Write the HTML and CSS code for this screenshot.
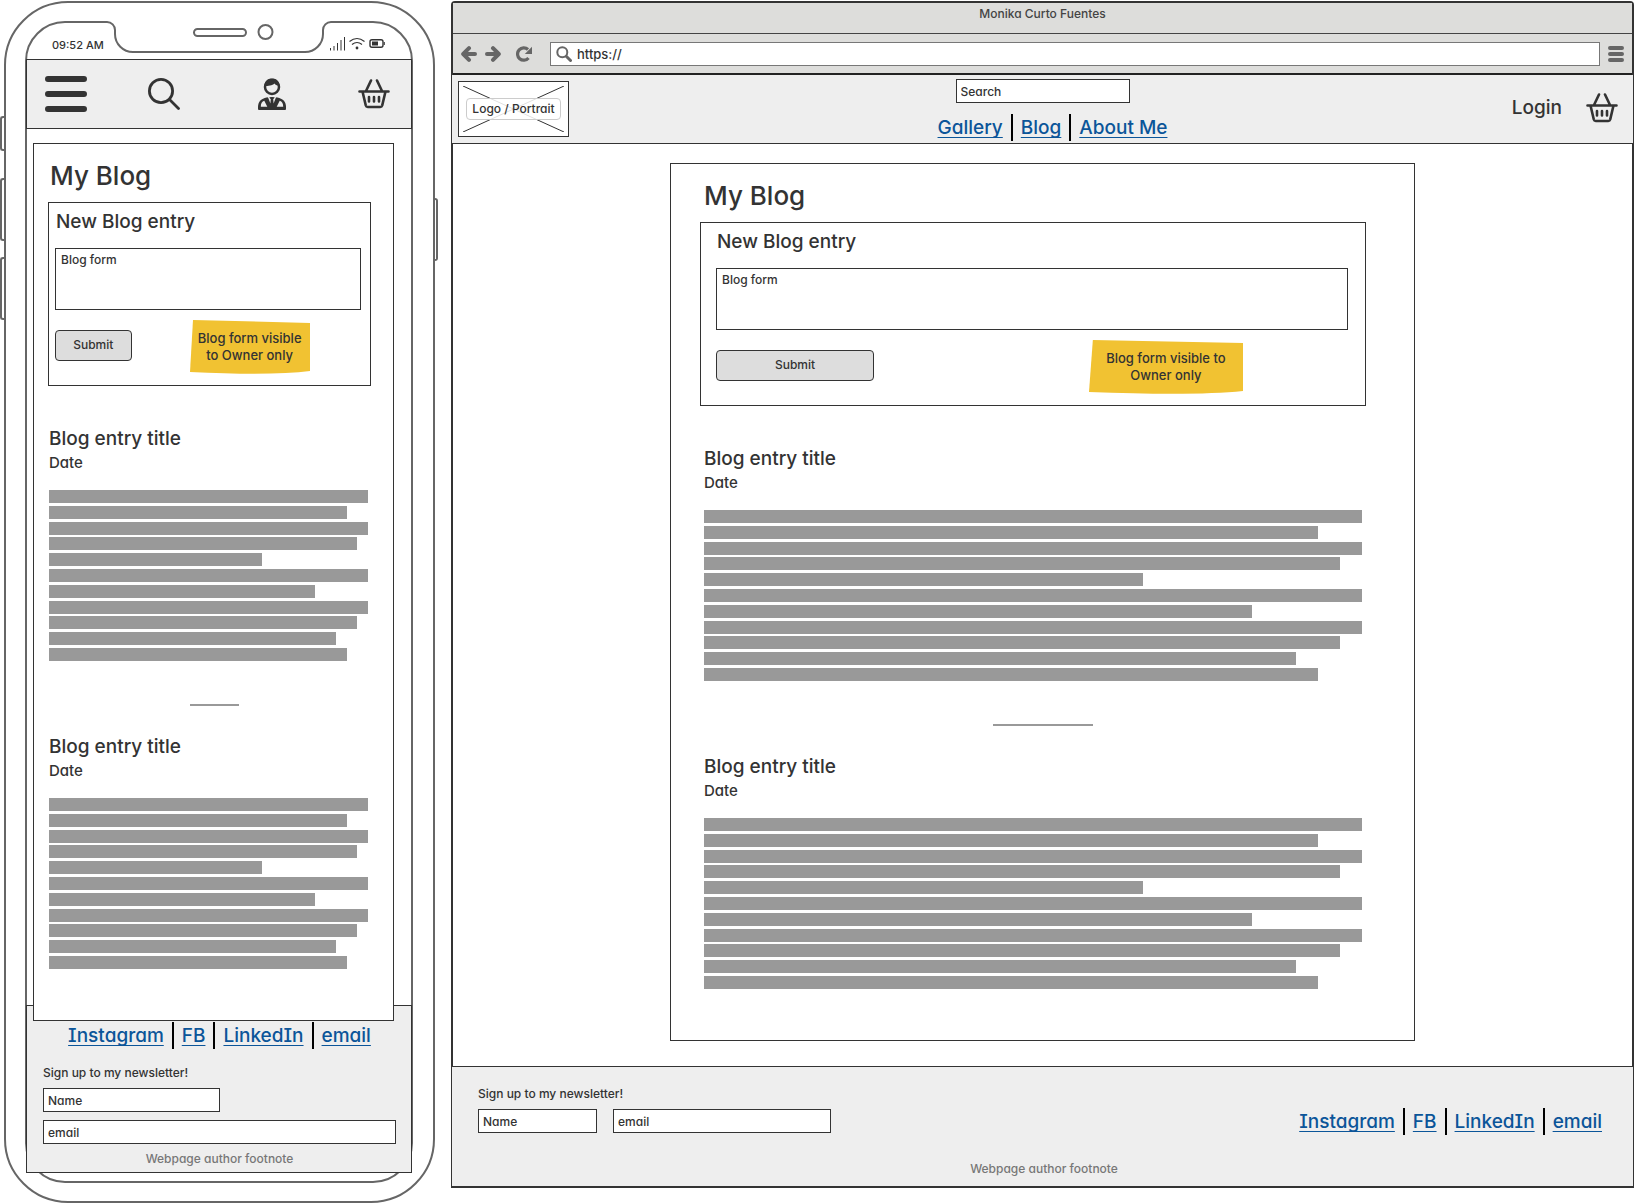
FILE: index.html
```html
<!DOCTYPE html>
<html lang="en">
<head>
<meta charset="utf-8">
<title>Monika Curto Fuentes</title>
<link rel="stylesheet" href="styles.css">
</head>
<body>
<svg class="symbols" aria-hidden="true">
  <symbol id="basket" viewBox="0 0 32 30">
    <g fill="none" stroke="#333" stroke-width="2.6" stroke-linecap="round" stroke-linejoin="round">
      <path d="M1.500 12.500h29M8 12L13 1.500M24 12L19 1.500M4.500 12.500L7.800 26.500Q8.200 28 9.700 28H22.300Q23.800 28 24.200 26.500L27.500 12.500"/>
      <path d="M11 18v4.500M16 18v4.500M21 18v4.500"/>
    </g>
  </symbol>
</svg>

<div class="boards">
  <section class="phone" aria-label="Phone layout">
    <i class="side-key key-mute"></i><i class="side-key key-up"></i><i class="side-key key-down"></i><i class="side-key key-power"></i>
    <div class="screen">
      <svg class="notch" width="226" height="34" viewBox="0 0 226 34">
        <path d="M1 0h224v1a8 8 0 0 0-8 8v4a18 18 0 0 1-18 18H27a18 18 0 0 1-18-18V9a8 8 0 0 0-8-8z" fill="#fff"/>
        <g fill="none" stroke="#666" stroke-width="2">
          <path d="M0 1h1a8 8 0 0 1 8 8v4a18 18 0 0 0 18 18h172a18 18 0 0 0 18-18V9a8 8 0 0 1 8-8h1"/>
          <rect x="88" y="8" width="52" height="7" rx="3.500"/>
          <circle cx="159.500" cy="11" r="7"/>
        </g>
      </svg>
      <div class="status">
        <span>09:52 AM</span>
        <svg width="56" height="14" viewBox="0 0 56 14" fill="none" stroke="#333">
          <path d="M1.500 11v2.500M5 9v4.500M8.500 6v7.500M12 3v10.500M15.500 0v13.500"/>
          <path d="M20.500 4.500q7.500-6 15 0M23 7.500q5-4 10 0" stroke-width="1.200"/>
          <circle cx="28" cy="11" r="1.400" fill="#333" stroke="none"/>
          <rect x="41" y="2.700" width="13" height="7.600" rx="2" stroke-width="1.400"/>
          <path d="M43 4.500h6v4h-6z" fill="#333" stroke="none"/><path d="M55.300 5v3"/>
        </svg>
      </div>

      <header class="m-header">
        <button class="icon-btn" aria-label="Menu"><svg width="42" height="36" viewBox="0 0 42 36"><path d="M3 3h36M3 18h36M3 33h36" stroke="#333" stroke-width="6" stroke-linecap="round"/></svg></button>
        <button class="icon-btn" aria-label="Search"><svg width="32" height="32" viewBox="0 0 32 32" fill="none" stroke="#333" stroke-width="2.800" stroke-linecap="round"><circle cx="13" cy="13" r="11.600"/><path d="M21.500 21.500L30.500 30.500"/></svg></button>
        <button class="icon-btn" aria-label="Account"><svg width="28" height="32" viewBox="0 0 28 32">
          <circle cx="14" cy="9" r="7" fill="none" stroke="#333" stroke-width="2.500"/>
          <path d="M6.500 8C6.500 3 9.500.5 14 .5S21.500 3 21.500 8C18.500 7.500 17 6.500 16.500 5.500C14.500 7.500 10 8 6.500 8z" fill="#333"/>
          <path d="M0 31V29C0 23.500 3.500 20.500 8.500 19.500L14 19L19.500 19.500C24.500 20.500 28 23.500 28 29V31Q28 32 27 32H1Q0 32 0 31z" fill="#333"/>
          <path d="M2.800 28.800C2.800 25.500 4 23.500 6.300 22.700L9.300 28.800zM25.200 28.800C25.200 25.500 24 23.500 21.700 22.700L18.700 28.800zM9.500 18L12 18.500 11.300 19.500 12.800 21.300 12.400 25.500zM18.500 18L16 18.500 16.700 19.500 15.200 21.300 15.600 25.500z" fill="#eee"/>
        </svg></button>
        <button class="icon-btn" aria-label="Basket"><svg width="32" height="30"><use href="#basket"/></svg></button>
      </header>

      <article class="panel">
        <h1>My Blog</h1>
        <form class="new-entry">
          <label for="m-blog">New Blog entry</label>
          <textarea id="m-blog" placeholder="Blog form"></textarea>
          <div class="actions">
            <button class="submit" type="button">Submit</button>
            <div class="note"><svg viewBox="0 0 120 54" preserveAspectRatio="none"><path d="M3 0L120 3V51Q82 56 0 52z" fill="#f1c232"/></svg><p>Blog form visible to Owner only</p></div>
          </div>
        </form>
        <section class="entry">
          <h2>Blog entry title</h2>
          <p>Date</p>
          <div class="lines"><i></i><i class="w93"></i><i></i><i class="w97"></i><i class="w67"></i><i></i><i class="w83"></i><i></i><i class="w97"></i><i class="w90"></i><i class="w93"></i></div>
        </section>
        <hr>
        <section class="entry">
          <h2>Blog entry title</h2>
          <p>Date</p>
          <div class="lines"><i></i><i class="w93"></i><i></i><i class="w97"></i><i class="w67"></i><i></i><i class="w83"></i><i></i><i class="w97"></i><i class="w90"></i><i class="w93"></i></div>
        </section>
      </article>

      <footer class="m-footer">
        <nav class="links"><a href="#">Instagram</a><a href="#">FB</a><a href="#">LinkedIn</a><a href="#">email</a></nav>
        <form class="signup">
          <p>Sign up to my newsletter!</p>
          <input class="name" type="text" aria-label="Name" placeholder="Name">
          <input class="email" type="email" aria-label="email" placeholder="email">
        </form>
        <p class="footnote">Webpage author footnote</p>
      </footer>
    </div>
  </section>

  <section class="browser" aria-label="Desktop layout">
    <div class="titlebar">Monika Curto Fuentes</div>
    <div class="toolbar">
      <button class="icon-btn" aria-label="Back"><svg width="16" height="16" viewBox="0 0 16 16" fill="none" stroke="#666" stroke-width="4" stroke-linecap="round" stroke-linejoin="round"><path d="M14 8H3M8 2.200L2.200 8 8 13.800"/></svg></button>
      <button class="icon-btn" aria-label="Forward"><svg width="16" height="16" viewBox="0 0 16 16" fill="none" stroke="#666" stroke-width="4" stroke-linecap="round" stroke-linejoin="round"><path d="M2 8H13M8 2.200L13.800 8 8 13.800"/></svg></button>
      <button class="icon-btn reload" aria-label="Reload"><svg width="16" height="16" viewBox="0 0 16 16"><path d="M12.500 12A6.200 6.200 0 1 1 12 3.500" fill="none" stroke="#666" stroke-width="3.200"/><path d="M16 .8V8H8.800z" fill="#666"/></svg></button>
      <div class="address">
        <svg width="16" height="16" viewBox="0 0 16 16" fill="none" stroke="#666"><circle cx="6.300" cy="6.300" r="5" stroke-width="2"/><path d="M10.500 10.500L14.500 14.500" stroke-width="3" stroke-linecap="round"/></svg>
        <input type="text" aria-label="Address" value="https://">
      </div>
      <button class="icon-btn" aria-label="Browser menu"><svg width="16" height="16" viewBox="0 0 16 16"><path d="M2 2h12M2 8h12M2 14h12" stroke="#666" stroke-width="4" stroke-linecap="round"/></svg></button>
    </div>

    <header class="d-header">
      <div class="logo">
        <svg width="101" height="46" viewBox="0 0 101 46"><path d="M0 0L101 46M101 0L0 46" stroke="#333"/></svg>
        <span>Logo / Portrait</span>
      </div>
      <div class="middle">
        <input type="search" aria-label="Search" placeholder="Search">
        <nav class="links"><a href="#">Gallery</a><a href="#">Blog</a><a href="#">About Me</a></nav>
      </div>
      <div class="account">
        <a href="#">Login</a>
        <button class="icon-btn" aria-label="Basket"><svg width="32" height="30"><use href="#basket"/></svg></button>
      </div>
    </header>

    <main>
      <article class="panel wide">
        <h1>My Blog</h1>
        <form class="new-entry">
          <label for="d-blog">New Blog entry</label>
          <textarea id="d-blog" placeholder="Blog form"></textarea>
          <div class="actions">
            <button class="submit" type="button">Submit</button>
            <div class="note"><svg viewBox="0 0 120 54" preserveAspectRatio="none"><path d="M3 0L120 3V51Q82 56 0 52z" fill="#f1c232"/></svg><p>Blog form visible to Owner only</p></div>
          </div>
        </form>
        <section class="entry">
          <h2>Blog entry title</h2>
          <p>Date</p>
          <div class="lines"><i></i><i class="w93"></i><i></i><i class="w97"></i><i class="w67"></i><i></i><i class="w83"></i><i></i><i class="w97"></i><i class="w90"></i><i class="w93"></i></div>
        </section>
        <hr>
        <section class="entry">
          <h2>Blog entry title</h2>
          <p>Date</p>
          <div class="lines"><i></i><i class="w93"></i><i></i><i class="w97"></i><i class="w67"></i><i></i><i class="w83"></i><i></i><i class="w97"></i><i class="w90"></i><i class="w93"></i></div>
        </section>
      </article>
    </main>

    <footer class="d-footer">
      <div class="footer-row">
        <form class="signup">
          <p>Sign up to my newsletter!</p>
          <input class="name" type="text" aria-label="Name" placeholder="Name">
          <input class="email" type="email" aria-label="email" placeholder="email">
        </form>
        <nav class="links"><a href="#">Instagram</a><a href="#">FB</a><a href="#">LinkedIn</a><a href="#">email</a></nav>
      </div>
      <p class="footnote">Webpage author footnote</p>
    </footer>
  </section>
</div>
</body>
</html>
```
FILE: styles.css
```css
* { box-sizing: border-box; }

body {
  margin: 0;
  background: #fff;
  color: #333;
  font: 500 12px/16px Inter, "Liberation Sans", sans-serif;
  font-feature-settings: "cv11", "cv08";
}

h1, h2, p { margin: 0; font-weight: inherit; }
svg { display: block; }
.symbols { position: absolute; width: 0; height: 0; }

input, textarea, button {
  font: inherit;
  font-feature-settings: inherit;
  color: inherit;
  margin: 0;
}

input, textarea {
  display: block;
  border: 1px solid #333;
  border-radius: 0;
  background: #fff;
  padding: 0 4px;
  outline: 0;
  appearance: none;
}

input { height: 24px; }
textarea { width: 100%; height: 62px; padding: 3px 5px; resize: none; }
::placeholder { color: #333; opacity: 1; }

.icon-btn { display: block; border: 0; padding: 0; background: none; }

.boards { display: flex; align-items: flex-start; gap: 13px; }

/* Shared pieces */
.links { display: flex; justify-content: center; line-height: 27px; font-size: 19px; }
.links a {
  color: #0b5599;
  padding: 0 8px;
  text-decoration: underline;
  text-decoration-thickness: 1px;
  text-underline-offset: 3px;
  text-decoration-skip-ink: none;
}
.links a + a { border-left: 2px solid #000; }
.footnote { color: #777; text-align: center; }

.panel {
  border: 1px solid #333;
  background: #fff;
  padding: 15px 22px 51px 14px;
}
.panel h1 { padding-left: 2px; font-size: 26px; line-height: 34px; margin-bottom: 9px; }

.new-entry { border: 1px solid #333; padding: 7px 9px 11px 6px; }
.new-entry label { display: block; padding-left: 1px; font-size: 19px; line-height: 24px; margin-bottom: 14px; }
.actions { display: flex; align-items: flex-start; padding-top: 10px; }
.submit {
  width: 25%;
  height: 31px;
  margin-top: 10px;
  padding-bottom: 3px;
  border: 1px solid #333;
  border-radius: 4px;
  background: #ddd;
}
.note { position: relative; width: 120px; height: 54px; margin-left: 19%; padding: 10px 6px; }
.note svg { position: absolute; inset: 0; width: 100%; height: 100%; }
.note p { position: relative; font-size: 13px; line-height: 17px; text-align: center; }

.entry { padding: 39px 3px 0 1px; }
.entry h2 { font-size: 19px; line-height: 28px; }
.entry p { font-size: 15px; line-height: 20px; margin-bottom: 17px; }
.lines { display: flex; flex-direction: column; justify-content: space-between; height: 171px; }
.lines i { height: 13px; background: #999; }
.lines .w97 { width: 96.6%; }
.lines .w93 { width: 93.3%; }
.lines .w90 { width: 90%; }
.lines .w83 { width: 83.3%; }
.lines .w67 { width: 66.7%; }
.panel hr { width: 15%; height: 2px; margin: 43px 0 0 44%; border: 0; background: #999; }
.panel hr + .entry { padding-top: 27px; }

.wide { padding-left: 29px; padding-right: 48px; }
.wide h1 { padding-left: 4px; }
.wide .new-entry { padding-left: 15px; padding-right: 17px; }
.wide .entry { padding-left: 4px; padding-right: 4px; }
.wide .note { width: 154px; margin-left: 34%; padding: 10px 12px; }

/* Phone */
.phone {
  position: relative;
  flex: 0 1 431px;
  margin: 1px 3px 1px 4px;
  border: 2px solid #666;
  border-radius: 64px;
  padding: 18px 20px 18px 19px;
}
.side-key { position: absolute; left: -6px; width: 5px; border: 2px solid #666; border-right: 0; border-radius: 3px 0 0 3px; }
.key-mute { top: 113px; height: 35px; }
.key-up { top: 175px; height: 63px; }
.key-down { top: 254px; height: 63px; }
.key-power { top: 195px; height: 63px; left: auto; right: -5px; border: 2px solid #666; border-left: 0; border-radius: 0 3px 3px 0; }

.screen { position: relative; border: 2px solid #666; border-radius: 40px; padding-bottom: 8px; }
.notch { position: absolute; top: -2px; left: 50%; margin-left: -113px; }
.status { display: flex; justify-content: space-between; height: 36px; padding: 14px 26px 0 25px; font-size: 11px; }

.m-header, .m-footer { margin: 0 -1px; border: 1px solid #333; background: #eee; }
.m-header {
  position: relative;
  display: grid;
  grid-template-columns: 103fr 110fr 100fr 32px;
  align-items: center;
  height: 70px;
  padding: 0 21px 0 18px;
}
.screen .panel { position: relative; z-index: 1; margin: 14px 17px 0 6px; }
.m-footer { position: relative; margin-top: -16px; padding: 16px 15px 5px 16px; }
.m-footer .signup { display: grid; gap: 8px; padding-top: 16px; }
.m-footer .signup p { margin-bottom: -1px; }
.m-footer .name { width: 50%; }
.m-footer .footnote { margin-top: 7px; }

/* Browser window */
.browser { flex: 1; min-width: 0; margin-top: 1px; border: 2px solid #333; border-radius: 4px 4px 0 0; }
.titlebar { height: 31px; padding-top: 3px; border-bottom: 1px solid #444; background: #dddddb; text-align: center; color: #444; }
.toolbar { display: flex; align-items: center; gap: 8px; height: 41px; padding: 0 8px; border-bottom: 2px solid #222; background: #dddddb; }
.toolbar .reload { margin: 0 10px 0 7px; }
.address { flex: 1; display: flex; align-items: center; height: 24px; border: 1px solid #777; background: #fff; padding-left: 5px; }
.address input { flex: 1; height: 20px; border: 0; padding: 0 5px; font-size: 13px; }

.d-header, .d-footer { margin: 0 -1px; background: #eee; }
.d-header {
  display: grid;
  grid-template-columns: 1fr auto 1fr;
  height: 69px;
  border-bottom: 1px solid #333;
  padding: 0 6px;
}
.logo { position: relative; width: 111px; height: 56px; margin-top: 6px; border: 1px solid #333; background: #fff; padding: 16px 7px; }
.logo svg { position: absolute; inset: 4px; }
.logo span {
  position: relative;
  display: block;
  line-height: 20px;
  border: 1px solid #ccc;
  border-radius: 4px;
  background: rgba(255, 255, 255, .85);
  text-align: center;
  white-space: nowrap;
}
.middle { padding-top: 4px; }
.middle input { width: 174px; margin: 0 auto 11px; }
.middle .links { padding-left: 20px; }
.account { display: flex; justify-content: flex-end; align-items: center; gap: 24px; padding: 0 9px 2px 0; }
.account a { font-size: 19px; color: inherit; text-decoration: none; }

main { padding: 19px 24px 25px; }
main .panel { max-width: 745px; margin: 0 auto; }

.d-footer { border-top: 1px solid #333; padding: 19px 23px 9px 26px; }
.footer-row { display: flex; justify-content: space-between; align-items: flex-start; }
.d-footer .signup { display: grid; grid-template-columns: 119px 218px; gap: 7px 16px; }
.d-footer .signup p { grid-column: 1 / -1; }
.d-footer .links { padding-top: 22px; }
.d-footer .footnote { margin-top: 26px; }
```
